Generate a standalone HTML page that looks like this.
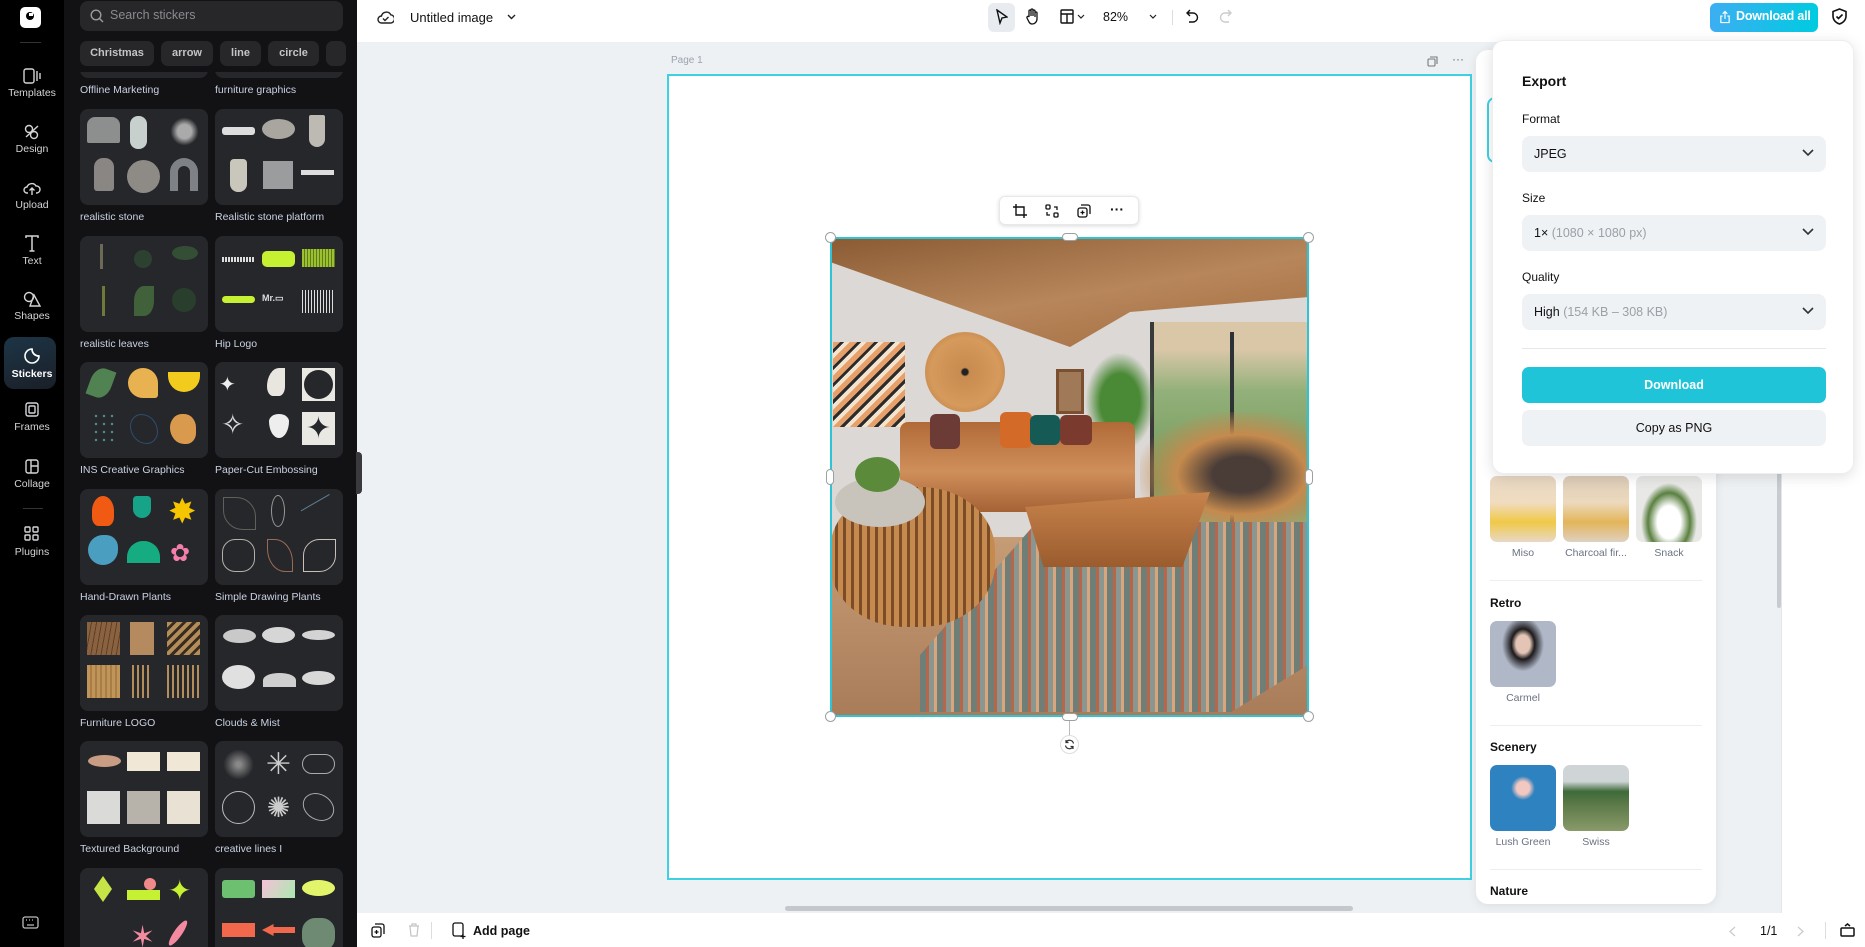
<!DOCTYPE html>
<html><head><meta charset="utf-8"><style>
*{box-sizing:border-box;margin:0;padding:0}
body{width:1865px;height:947px;overflow:hidden;position:relative;font-family:"Liberation Sans",sans-serif;background:#eef1f4}
.a{position:absolute}
.rail{left:0;top:0;width:64px;height:947px;background:#000}
.ri{position:absolute;left:0;width:64px;text-align:center;color:#d4d4d8;font-size:10.5px}
.ri svg{display:block;margin:0 auto 3px}
.panel{left:64px;top:0;width:293px;height:947px;background:#121214;overflow:hidden}
.card{position:absolute;width:128px;height:96px;background:#26272b;border-radius:8px}
.lbl{position:absolute;color:#c9d2e3;font-size:10.5px;white-space:nowrap}
.c{position:absolute;width:33px;height:33px}
.chip{position:absolute;top:41px;height:25px;background:#27272a;border-radius:7px;color:#c4c4c8;font-size:11px;font-weight:bold;text-align:center;line-height:25px;z-index:3}
.top{left:357px;top:0;width:1508px;height:42px;background:#fff}
.sel{position:absolute;left:29px;width:304px;height:36px;background:#eff2f5;border-radius:8px;font-size:12.5px;line-height:36px;padding-left:12px;color:#111}
.sel svg{position:absolute;right:12px;top:13px}
.h{position:absolute;width:11px;height:11px;border-radius:50%;background:#fff;border:1px solid #9aa0a6}
.th{position:absolute;width:66px;height:66px;border-radius:7px}
.tl{position:absolute;width:66px;text-align:center;font-size:10.5px;color:#6b7280}
.sec{position:absolute;left:14px;font-size:12px;font-weight:bold;color:#111}
.dv{position:absolute;left:14px;width:212px;height:1px;background:#eceef0}
</style></head><body>

<!-- left rail -->
<div class="a rail">
  <div class="a" style="left:20px;top:7px;width:21px;height:21px;background:#fff;border-radius:5px"><div class="a" style="left:6px;top:5px;width:8px;height:8px;border-radius:50%;background:#000"></div><div class="a" style="left:9px;top:6px;width:4px;height:3px;background:#fff"></div></div>
  <div class="a" style="left:20px;top:42px;width:21px;height:1px;background:#333"></div>
  <div class="ri" style="top:68px"><svg width="18" height="16" viewBox="0 0 18 16" fill="none" stroke="#d4d4d8" stroke-width="1.4"><rect x="1" y="1" width="10" height="14" rx="2"/><path d="M14 3v10M17 5v6"/></svg>Templates</div>
  <div class="ri" style="top:124px"><svg width="18" height="16" viewBox="0 0 18 16" fill="none" stroke="#d4d4d8" stroke-width="1.4"><circle cx="6" cy="5" r="3.5"/><circle cx="11" cy="11" r="3.5"/><path d="M3 13l12-11"/></svg>Design</div>
  <div class="ri" style="top:180px"><svg width="18" height="16" viewBox="0 0 18 16" fill="none" stroke="#d4d4d8" stroke-width="1.4"><path d="M5 13H4a3 3 0 010-6 5 5 0 019-1 3.5 3.5 0 011 7h-1M9 15V8M6.5 10.5L9 8l2.5 2.5"/></svg>Upload</div>
  <div class="ri" style="top:235px"><svg width="18" height="17" viewBox="0 0 18 17" fill="none" stroke="#d4d4d8" stroke-width="1.5"><path d="M3 3V1h12v2M9 1v15M6.5 16h5"/></svg>Text</div>
  <div class="ri" style="top:291px"><svg width="18" height="16" viewBox="0 0 18 16" fill="none" stroke="#d4d4d8" stroke-width="1.4"><circle cx="6" cy="6" r="4.5"/><path d="M11 4l6 11H7z"/></svg>Shapes</div>
  <div class="a" style="left:4px;top:337px;width:52px;height:52px;border-radius:10px;background:linear-gradient(160deg,#1d3547,#1a1f27)"></div>
  <div class="ri" style="top:347px;color:#fff;font-weight:bold"><svg width="18" height="18" viewBox="0 0 18 18" fill="none" stroke="#fff" stroke-width="1.6"><path d="M9 2a7 7 0 107 7c-4 0-7-3-7-7z"/><path d="M9 2c0 4 3 7 7 7"/></svg>Stickers</div>
  <div class="ri" style="top:402px"><svg width="18" height="16" viewBox="0 0 18 16" fill="none" stroke="#d4d4d8" stroke-width="1.4"><rect x="3" y="1" width="12" height="13" rx="2"/><rect x="6" y="4" width="6" height="7" rx="1"/></svg>Frames</div>
  <div class="ri" style="top:459px"><svg width="18" height="16" viewBox="0 0 18 16" fill="none" stroke="#d4d4d8" stroke-width="1.4"><rect x="3" y="1" width="12" height="13" rx="2"/><path d="M8 1v13M8 7h7"/></svg>Collage</div>
  <div class="a" style="left:23px;top:508px;width:20px;height:1px;background:#333"></div>
  <div class="ri" style="top:526px"><svg width="18" height="17" viewBox="0 0 18 17" fill="none" stroke="#d4d4d8" stroke-width="1.4"><rect x="2" y="1" width="5" height="5" rx="1"/><rect x="10" y="1" width="5" height="5" rx="1"/><rect x="2" y="9" width="5" height="5" rx="1"/><rect x="10" y="9" width="5" height="5" rx="1"/></svg>Plugins</div>
  <svg class="a" style="left:22px;top:916px" width="17" height="13" viewBox="0 0 17 13" fill="none" stroke="#bbb" stroke-width="1.3"><rect x="1" y="1" width="15" height="11" rx="2"/><path d="M4 4h1M7 4h1M10 4h1M13 4h0M5 9h7"/></svg>
</div>

<!-- sticker panel -->
<div class="a panel">
  <div class="card" style="left:16px;top:50px;height:28px;border-radius:0 0 8px 8px"></div>
  <div class="card" style="left:151px;top:50px;height:28px;border-radius:0 0 8px 8px"></div>
  <div class="a" style="left:0;top:0;width:293px;height:72px;background:#121214;z-index:2"></div>
  <div class="a" style="left:16px;top:1px;width:263px;height:30px;background:#27272a;border-radius:8px;z-index:3"></div>
  <svg class="a" style="left:26px;top:9px;z-index:4" width="14" height="14" viewBox="0 0 14 14" fill="none" stroke="#9a9aa0" stroke-width="1.4"><circle cx="6" cy="6" r="4.8"/><path d="M9.5 9.5L13 13"/></svg>
  <div class="a" style="left:46px;top:8px;color:#8a8a90;font-size:12.5px;z-index:4">Search stickers</div>
  <div class="chip" style="left:16px;width:74px">Christmas</div>
  <div class="chip" style="left:97px;width:52px">arrow</div>
  <div class="chip" style="left:156px;width:41px">line</div>
  <div class="chip" style="left:204px;width:51px">circle</div>
  <div class="chip" style="left:262px;width:20px"></div>
  <div class="lbl" style="left:16px;top:84px">Offline Marketing</div>
  <div class="lbl" style="left:151px;top:84px">furniture graphics</div>

  <!-- row1 -->
  <div class="card" style="left:16px;top:109px">
    <div class="c" style="left:7px;top:8px;background:#8c8f8e;border-radius:8px 8px 2px 2px;height:26px"></div>
    <div class="c" style="left:50px;top:7px;width:17px;background:#c7d0cc;border-radius:8px"></div>
    <div class="c" style="left:88px;top:6px;background:radial-gradient(#aaa 30%,transparent 60%)"></div>
    <div class="c" style="left:14px;top:49px;width:20px;background:#8a8683;border-radius:9px 9px 3px 3px"></div>
    <div class="c" style="left:47px;top:51px;background:#8e8b87;border-radius:50%"></div>
    <div class="c" style="left:90px;top:49px;width:28px;border:8px solid #7e8186;border-bottom:none;border-radius:14px 14px 0 0"></div>
  </div>
  <div class="card" style="left:151px;top:109px">
    <div class="c" style="left:7px;top:18px;height:8px;background:#ddd;border-radius:3px"></div>
    <div class="c" style="left:47px;top:10px;height:20px;background:#a9a59f;border-radius:50%"></div>
    <div class="c" style="left:94px;top:6px;width:16px;height:32px;background:#bcbab3;border-radius:2px 2px 8px 8px"></div>
    <div class="c" style="left:15px;top:50px;width:17px;background:#c9c6bc;border-radius:4px 4px 8px 8px"></div>
    <div class="c" style="left:48px;top:52px;width:30px;height:28px;background:#9a9c9d"></div>
    <div class="c" style="left:86px;top:61px;height:5px;background:#ddd"></div>
  </div>
  <div class="lbl" style="left:16px;top:211px">realistic stone</div>
  <div class="lbl" style="left:151px;top:211px">Realistic stone platform</div>

  <!-- row2 -->
  <div class="card" style="left:16px;top:236px">
    <div class="c" style="left:20px;top:8px;width:3px;height:25px;background:#6a6a55"></div>
    <div class="c" style="left:54px;top:14px;width:18px;height:18px;background:#2f4d33;border-radius:50%;opacity:.7"></div>
    <div class="c" style="left:92px;top:10px;width:26px;height:14px;background:#3a5e3a;border-radius:50%;opacity:.7"></div>
    <div class="c" style="left:22px;top:50px;width:3px;height:30px;background:#6d7a3a"></div>
    <div class="c" style="left:54px;top:50px;width:20px;height:30px;background:#49713f;border-radius:50% 0;opacity:.8"></div>
    <div class="c" style="left:92px;top:52px;width:24px;height:24px;background:#2d4e30;border-radius:50%;opacity:.6"></div>
  </div>
  <div class="card" style="left:151px;top:236px">
    <div class="c" style="left:7px;top:21px;height:5px;background:repeating-linear-gradient(90deg,#ddd 0 2px,transparent 2px 3px)"></div>
    <div class="c" style="left:47px;top:15px;height:16px;background:#c6f032;border-radius:5px"></div>
    <div class="c" style="left:87px;top:13px;height:18px;background:repeating-linear-gradient(90deg,#9dc030 0 2px,#5d7a18 2px 3px)"></div>
    <div class="c" style="left:7px;top:60px;height:7px;background:#c6f032;border-radius:4px"></div>
    <div class="c" style="left:47px;top:57px;color:#ddd;font-size:9px;font-weight:bold">Mr.▭</div>
    <div class="c" style="left:87px;top:54px;height:23px;background:repeating-linear-gradient(90deg,#ddd 0 1px,transparent 1px 3px)"></div>
  </div>
  <div class="lbl" style="left:16px;top:338px">realistic leaves</div>
  <div class="lbl" style="left:151px;top:338px">Hip Logo</div>

  <!-- row3 -->
  <div class="card" style="left:16px;top:362px">
    <div class="c" style="left:10px;top:6px;width:22px;height:30px;background:#5c9a5c;border-radius:50% 0;opacity:.8;transform:rotate(20deg)"></div>
    <div class="c" style="left:48px;top:6px;width:30px;height:30px;background:#e7b24f;border-radius:50% 50% 10% 50%"></div>
    <div class="c" style="left:88px;top:10px;width:32px;height:20px;background:#f1cb1d;border-radius:0 0 20px 20px"></div>
    <div class="c" style="left:12px;top:50px;width:24px;height:30px;background:radial-gradient(circle,#4a8a8a 20%,transparent 25%) 0 0/8px 8px"></div>
    <div class="c" style="left:50px;top:52px;width:28px;height:30px;border:1.5px solid #2d4d70;border-radius:40% 60%"></div>
    <div class="c" style="left:90px;top:52px;width:26px;height:30px;background:#d99a4d;border-radius:50% 50% 40% 60%"></div>
  </div>
  <div class="card" style="left:151px;top:362px">
    <div class="c" style="left:4px;top:10px;color:#eee;font-size:20px">✦</div>
    <div class="c" style="left:52px;top:6px;width:18px;height:28px;background:#e8e6df;border-radius:80% 0 40% 40%"></div>
    <div class="c" style="left:87px;top:6px;background:#e9e8e3"><div class="a" style="left:2px;top:2px;width:29px;height:29px;border-radius:50%;background:#26272b"></div></div>
    <div class="c" style="left:6px;top:46px;color:#ddd;font-size:28px;line-height:33px">✧</div>
    <div class="c" style="left:54px;top:52px;width:20px;height:24px;background:#eee;border-radius:50% 50% 50% 50%/30% 30% 70% 70%"></div>
    <div class="c" style="left:87px;top:50px;background:#e9e8e3;color:#26272b;font-size:30px;line-height:33px;text-align:center">✦</div>
  </div>
  <div class="lbl" style="left:16px;top:464px">INS Creative Graphics</div>
  <div class="lbl" style="left:151px;top:464px">Paper-Cut Embossing</div>

  <!-- row4 -->
  <div class="card" style="left:16px;top:489px">
    <div class="c" style="left:12px;top:7px;width:22px;height:30px;background:#f05a12;border-radius:50% 50% 30% 30%"></div>
    <div class="c" style="left:53px;top:7px;width:18px;height:22px;background:#16a387;border-radius:4px 4px 10px 10px"></div>
    <div class="c" style="left:88px;top:7px;color:#f6c500;font-size:34px;line-height:33px">✸</div>
    <div class="c" style="left:8px;top:46px;width:30px;height:30px;background:#4a9fc0;border-radius:50% 40% 50% 50%"></div>
    <div class="c" style="left:47px;top:52px;height:22px;background:#16ac82;border-radius:16px 16px 0 0"></div>
    <div class="c" style="left:90px;top:50px;color:#f67eab;font-size:24px">✿</div>
  </div>
  <div class="card" style="left:151px;top:489px">
    <div class="c" style="left:8px;top:8px;border:1px solid #6e6f66;border-radius:0 60%;opacity:.8"></div>
    <div class="c" style="left:56px;top:6px;width:14px;height:32px;border:1px solid #9a9891;border-radius:50%"></div>
    <div class="c" style="left:88px;top:12px;height:18px;border-top:1.5px solid #5d7f96;transform:rotate(-30deg)"></div>
    <div class="c" style="left:7px;top:50px;border:1px solid #b3b0a4;border-radius:40%"></div>
    <div class="c" style="left:52px;top:50px;width:26px;border:1px solid #9a6a55;border-radius:0 70%"></div>
    <div class="c" style="left:88px;top:50px;border:1px solid #c8c1b6;border-radius:50% 0"></div>
  </div>
  <div class="lbl" style="left:16px;top:591px">Hand-Drawn Plants</div>
  <div class="lbl" style="left:151px;top:591px">Simple Drawing Plants</div>

  <!-- row5 -->
  <div class="card" style="left:16px;top:615px">
    <div class="c" style="left:7px;top:7px;background:repeating-linear-gradient(100deg,#8a6240 0 4px,#5d3f27 4px 5px)"></div>
    <div class="c" style="left:50px;top:7px;width:24px;background:#b58a5f"></div>
    <div class="c" style="left:87px;top:7px;background:repeating-linear-gradient(135deg,#b38d5a 0 4px,#3a2d20 4px 7px)"></div>
    <div class="c" style="left:7px;top:50px;background:repeating-linear-gradient(90deg,#c0955a 0 3px,#a97d45 3px 5px)"></div>
    <div class="c" style="left:52px;top:50px;width:20px;background:repeating-linear-gradient(90deg,#b38d5a 0 2px,transparent 2px 5px)"></div>
    <div class="c" style="left:87px;top:50px;background:repeating-linear-gradient(90deg,#b38d5a 0 2px,transparent 2px 5px)"></div>
  </div>
  <div class="card" style="left:151px;top:615px">
    <div class="c" style="left:8px;top:14px;height:14px;background:#c9c9c9;border-radius:50%"></div>
    <div class="c" style="left:47px;top:12px;height:16px;background:#d6d6d6;border-radius:50%"></div>
    <div class="c" style="left:87px;top:15px;height:10px;background:#d3d3d3;border-radius:50%"></div>
    <div class="c" style="left:7px;top:50px;height:24px;background:#e0e0e0;border-radius:50%"></div>
    <div class="c" style="left:48px;top:58px;height:14px;background:#cfcfcf;border-radius:50% 50% 0 0"></div>
    <div class="c" style="left:87px;top:56px;height:14px;background:#d8d8d8;border-radius:50%"></div>
  </div>
  <div class="lbl" style="left:16px;top:717px">Furniture LOGO</div>
  <div class="lbl" style="left:151px;top:717px">Clouds &amp; Mist</div>

  <!-- row6 -->
  <div class="card" style="left:16px;top:741px">
    <div class="c" style="left:8px;top:14px;height:12px;background:#c99c84;border-radius:50%"></div>
    <div class="c" style="left:47px;top:11px;height:19px;background:#f1e7d6"></div>
    <div class="c" style="left:87px;top:11px;height:19px;background:#f1e7d6"></div>
    <div class="c" style="left:7px;top:50px;background:#dadad8"></div>
    <div class="c" style="left:47px;top:50px;background:#b8b3aa"></div>
    <div class="c" style="left:87px;top:50px;background:#e8e1d4"></div>
  </div>
  <div class="card" style="left:151px;top:741px">
    <div class="c" style="left:7px;top:7px;border-radius:50%;background:radial-gradient(#888 10%,transparent 65%)"></div>
    <div class="c" style="left:47px;top:7px;color:#ccc;font-size:30px;line-height:33px;text-align:center">✳</div>
    <div class="c" style="left:87px;top:13px;height:20px;border:1px solid #aaa;border-radius:10px"></div>
    <div class="c" style="left:7px;top:50px;border:1px solid #bbb;border-radius:50%"></div>
    <div class="c" style="left:47px;top:50px;color:#ccc;font-size:28px;line-height:33px;text-align:center">✺</div>
    <div class="c" style="left:87px;top:53px;height:26px;border:1px solid #aaa;border-radius:50%;transform:rotate(30deg)"></div>
  </div>
  <div class="lbl" style="left:16px;top:843px">Textured Background</div>
  <div class="lbl" style="left:151px;top:843px">creative lines I</div>

  <!-- row7 -->
  <div class="card" style="left:16px;top:868px;height:90px">
    <div class="c" style="left:14px;top:8px;width:18px;height:26px;background:#c6e447;clip-path:polygon(50% 0,100% 50%,50% 100%,0 50%)"></div>
    <div class="c" style="left:47px;top:22px;height:10px;background:#c6f032"></div>
    <div class="c" style="left:64px;top:10px;width:12px;height:12px;background:#f08a8a;border-radius:50%"></div>
    <div class="c" style="left:88px;top:6px;color:#c6f032;font-size:28px">✦</div>
    <div class="c" style="left:50px;top:52px;color:#f28ba0;font-size:30px">✶</div>
    <div class="c" style="left:94px;top:50px;width:8px;height:30px;background:#f48aa0;border-radius:50%;transform:rotate(35deg)"></div>
  </div>
  <div class="card" style="left:151px;top:868px;height:90px">
    <div class="c" style="left:7px;top:12px;height:18px;background:#6cc070;border-radius:3px"></div>
    <div class="c" style="left:47px;top:12px;height:18px;background:linear-gradient(120deg,#f6c0d8,#a9eab0)"></div>
    <div class="c" style="left:87px;top:12px;height:16px;background:#e2f46a;border-radius:50%"></div>
    <div class="c" style="left:7px;top:55px;height:14px;background:#f2684d"></div>
    <div class="c" style="left:47px;top:56px;height:12px;background:#f2684d;clip-path:polygon(0 50%,35% 0,35% 25%,100% 25%,100% 75%,35% 75%,35% 100%)"></div>
    <div class="c" style="left:87px;top:50px;background:#6e8a72;border-radius:40%"></div>
  </div>
</div>
<div class="a" style="left:356px;top:452px;width:6px;height:42px;background:#3a3a3e;border-radius:0 4px 4px 0"></div>

<!-- top bar -->
<div class="a top">
  <svg class="a" style="left:20px;top:9px" width="17" height="16" viewBox="0 0 17 16" fill="none" stroke="#222" stroke-width="1.4"><path d="M5 14H4.5a3.5 3.5 0 010-7 5 5 0 019.3-1.2A3.8 3.8 0 0113 14H5z"/><path d="M6 9.5l2 2 3.5-3.5"/></svg>
  <div class="a" style="left:53px;top:10px;font-size:13px;color:#111">Untitled image</div>
  <svg class="a" style="left:150px;top:14px" width="9" height="6" viewBox="0 0 9 6" fill="none" stroke="#222" stroke-width="1.4"><path d="M1 1l3.5 3.5L8 1"/></svg>
  <div class="a" style="left:631px;top:3px;width:27px;height:29px;background:#e8ebef;border-radius:6px"></div>
  <svg class="a" style="left:639px;top:9px" width="12" height="16" viewBox="0 0 12 16" fill="none" stroke="#111" stroke-width="1.4"><path d="M1 1l10 7-5 1-2 5z"/></svg>
  <svg class="a" style="left:668px;top:8px" width="15" height="17" viewBox="0 0 15 17" fill="none" stroke="#111" stroke-width="1.3"><path d="M4 9V3a1 1 0 012 0v5V2a1 1 0 012 0v6V3a1 1 0 012 0v6V5a1 1 0 012 0v6a5 5 0 01-5 5H7a4 4 0 01-3-2l-2-4a1 1 0 012-1z"/></svg>
  <svg class="a" style="left:703px;top:9px" width="14" height="15" viewBox="0 0 14 15" fill="none" stroke="#111" stroke-width="1.4"><rect x="1" y="1" width="12" height="13" rx="1"/><path d="M1 5h12M7 5v9"/></svg>
  <svg class="a" style="left:720px;top:14px" width="8" height="5" viewBox="0 0 8 5" fill="none" stroke="#222" stroke-width="1.2"><path d="M1 1l3 3 3-3"/></svg>
  <div class="a" style="left:746px;top:10px;font-size:12.5px;color:#111">82%</div>
  <svg class="a" style="left:792px;top:14px" width="8" height="5" viewBox="0 0 8 5" fill="none" stroke="#222" stroke-width="1.2"><path d="M1 1l3 3 3-3"/></svg>
  <div class="a" style="left:815px;top:10px;width:1px;height:15px;background:#ddd"></div>
  <svg class="a" style="left:829px;top:9px" width="13" height="15" viewBox="0 0 13 15" fill="none" stroke="#111" stroke-width="1.4"><path d="M4 1L1 4l3 3M1 4h6a4.5 4.5 0 010 9H3"/></svg>
  <svg class="a" style="left:862px;top:9px" width="13" height="15" viewBox="0 0 13 15" fill="none" stroke="#ccc" stroke-width="1.4"><path d="M9 1l3 3-3 3M12 4H6a4.5 4.5 0 000 9h4"/></svg>
  <div class="a" style="left:1353px;top:3px;width:108px;height:29px;border-radius:6px;background:linear-gradient(90deg,#3caef2,#00cbe0)"></div>
  <svg class="a" style="left:1362px;top:10px" width="12" height="14" viewBox="0 0 13 14" fill="none" stroke="#fff" stroke-width="1.3"><path d="M4 6H2v7h9V6H9M6.5 9V1M4 3.5L6.5 1 9 3.5"/></svg>
  <div class="a" style="left:1379px;top:9px;color:#fff;font-size:12.5px;font-weight:bold;letter-spacing:-0.2px">Download all</div>
  <svg class="a" style="left:1475px;top:8px" width="15" height="17" viewBox="0 0 15 17" fill="none" stroke="#111" stroke-width="1.6"><path d="M7.5 1L14 3.5V8c0 4-3 7-6.5 8C4 15 1 12 1 8V3.5z"/><path d="M4.5 8.5l2 2 4-4"/></svg>
</div>

<!-- canvas right strip -->
<div class="a" style="left:1781px;top:42px;width:84px;height:871px;background:#fff;border-left:1px solid #e3e6ea"></div>
<div class="a" style="left:1777px;top:50px;width:4px;height:558px;background:#c8ccd0;border-radius:2px"></div>

<!-- page -->
<div class="a" style="left:671px;top:55px;font-size:10px;color:#9ca3af">Page 1</div>
<svg class="a" style="left:1427px;top:56px" width="11" height="11" viewBox="0 0 11 11" fill="none" stroke="#777" stroke-width="1.1"><rect x="1" y="3" width="7" height="7" rx="1"/><path d="M3 1h7v7"/></svg>
<div class="a" style="left:1452px;top:52px;font-size:12px;color:#666">···</div>
<div class="a" style="left:667px;top:74px;width:805px;height:806px;background:#fff;border:2px solid #3fd0e2"></div>

<!-- image -->
<div class="a" style="left:830px;top:237px;width:479px;height:480px;overflow:hidden;background:#dcd8d6">
  <div class="a" style="left:0;top:0;width:479px;height:120px;background:linear-gradient(170deg,#8a5a34,#b7865a 50%,#a0683d);clip-path:polygon(0 0,100% 0,100% 60px,300px 75px,240px 110px,0 25px)"></div>
  <div class="a" style="left:320px;top:85px;width:159px;height:230px;background:linear-gradient(180deg,#d9c7a8 0 12%,#93b07a 30%,#6f9a5a 70%,#a9b890);border-left:4px solid #3a3a3a"></div>
  <div class="a" style="left:400px;top:95px;width:4px;height:220px;background:#2e3236"></div>
  <div class="a" style="left:3px;top:105px;width:72px;height:85px;background:repeating-linear-gradient(135deg,#e7a06a 0 5px,#2b2b2b 5px 8px,#f3e4d0 8px 12px)"></div>
  <div class="a" style="left:95px;top:95px;width:80px;height:80px;border-radius:50%;background:radial-gradient(circle,#222 5%,#c98b4f 8%,#d59a5c 60%,#b7773d)"></div>
  <div class="a" style="left:226px;top:132px;width:28px;height:45px;background:#a07a58;border:3px solid #7a5030"></div>
  <div class="a" style="left:255px;top:115px;width:70px;height:100px;background:radial-gradient(ellipse,#4a8a36 40%,transparent 70%)"></div>
  <div class="a" style="left:70px;top:185px;width:235px;height:90px;background:linear-gradient(180deg,#b06a38,#cf8f5a 55%,#a56235);border-radius:8px"></div>
  <div class="a" style="left:100px;top:177px;width:30px;height:35px;background:#6d3b36;border-radius:6px"></div>
  <div class="a" style="left:170px;top:175px;width:32px;height:36px;background:#d36a28;border-radius:6px"></div>
  <div class="a" style="left:200px;top:178px;width:30px;height:30px;background:#155a55;border-radius:6px"></div>
  <div class="a" style="left:230px;top:178px;width:32px;height:30px;background:#7a3a2e;border-radius:6px"></div>
  <div class="a" style="left:310px;top:175px;width:169px;height:125px;background:radial-gradient(ellipse at 60% 50%,#4a3d38 20%,#c58a4e 45%,transparent 75%)"></div>
  <div class="a" style="left:0;top:300px;width:479px;height:180px;background:linear-gradient(180deg,#c69c76,#a87c58)"></div>
  <div class="a" style="left:90px;top:285px;width:389px;height:190px;background:repeating-linear-gradient(90deg,#6f7f78 0 6px,#b8664a 6px 9px,#8a9690 9px 14px,#d9a57d 14px 17px);clip-path:polygon(30% 0,100% 0,100% 75%,80% 100%,0 100%,0 70%)"></div>
  <div class="a" style="left:195px;top:255px;width:185px;height:75px;background:linear-gradient(180deg,#c7834c,#9b5c2e);clip-path:polygon(0 20%,100% 0,85% 100%,10% 100%)"></div>
  <div class="a" style="left:0;top:250px;width:165px;height:140px;border-radius:45%;background:repeating-linear-gradient(90deg,#c6894e 0 5px,#7a4c27 5px 8px)"></div>
  <div class="a" style="left:5px;top:240px;width:90px;height:50px;border-radius:50%;background:#c9c4bb"></div>
  <div class="a" style="left:25px;top:220px;width:45px;height:35px;border-radius:50%;background:#5a8a3a"></div>
</div>
<div class="a" style="left:830px;top:237px;width:479px;height:480px;border:2px solid #2dc4d8"></div>
<div class="h" style="left:825px;top:232px"></div><div class="h" style="left:1303px;top:232px"></div>
<div class="h" style="left:825px;top:711px"></div><div class="h" style="left:1303px;top:711px"></div>
<div class="a" style="left:1062px;top:233px;width:16px;height:8px;border-radius:4px;background:#fff;border:1px solid #9aa0a6"></div>
<div class="a" style="left:1062px;top:713px;width:16px;height:8px;border-radius:4px;background:#fff;border:1px solid #9aa0a6"></div>
<div class="a" style="left:826px;top:469px;width:8px;height:16px;border-radius:4px;background:#fff;border:1px solid #9aa0a6"></div>
<div class="a" style="left:1305px;top:469px;width:8px;height:16px;border-radius:4px;background:#fff;border:1px solid #9aa0a6"></div>
<div class="a" style="left:1069px;top:721px;width:1px;height:14px;background:#bbb"></div>
<div class="a" style="left:1060px;top:735px;width:19px;height:19px;border-radius:50%;background:#fff;border:1px solid #ddd"></div>
<svg class="a" style="left:1064px;top:739px" width="11" height="11" viewBox="0 0 11 11" fill="none" stroke="#333" stroke-width="1.2"><path d="M9.5 4.5A4 4 0 002 3.5M1.5 6.5A4 4 0 009 7.5M2 1v2.5h2.5M9 10V7.5H6.5"/></svg>
<!-- context toolbar -->
<div class="a" style="left:999px;top:196px;width:140px;height:29px;background:#fff;border-radius:6px;box-shadow:0 1px 4px rgba(0,0,0,.15);border:1px solid #e6e8ea"></div>
<svg class="a" style="left:1013px;top:204px" width="14" height="14" viewBox="0 0 14 14" fill="none" stroke="#111" stroke-width="1.4"><path d="M3 0v11h11M0 3h11v11"/></svg>
<svg class="a" style="left:1045px;top:204px" width="14" height="14" viewBox="0 0 14 14" fill="none" stroke="#111" stroke-width="1.3"><rect x="1" y="1" width="4" height="4" rx="1"/><rect x="9" y="9" width="4" height="4" rx="1"/><path d="M9 3h3v3M5 11H2V8"/></svg>
<svg class="a" style="left:1077px;top:204px" width="14" height="14" viewBox="0 0 14 14" fill="none" stroke="#111" stroke-width="1.3"><rect x="1" y="4" width="9" height="9" rx="2"/><path d="M4 1h7a2 2 0 012 2v7M5.5 6.5v4M3.5 8.5h4"/></svg>
<div class="a" style="left:1110px;top:201px;font-size:14px;font-weight:bold;color:#111">···</div>

<!-- right filter panel -->
<div class="a" style="left:1476px;top:50px;width:240px;height:854px;background:#fff;border-radius:12px;box-shadow:0 2px 10px rgba(0,0,0,.08)">
  <div class="a" style="left:11px;top:47px;width:20px;height:66px;border:2px solid #3fd0e2;border-right:none;border-radius:8px 0 0 8px"></div>
  <div class="th" style="left:14px;top:426px;background:linear-gradient(180deg,#e7d6c2,#f0dcc0 40%,#f0c948 70%,#e8d8c6)"></div>
  <div class="th" style="left:87px;top:426px;background:linear-gradient(180deg,#dccbb8,#ecd9bd 40%,#e3b55a 70%,#dfd0c0)"></div>
  <div class="th" style="left:160px;top:426px;background:radial-gradient(ellipse at 50% 70%,#fff 25%,#5a8040 45%,#e8e8e6 60%)"></div>
  <div class="tl" style="left:14px;top:497px">Miso</div>
  <div class="tl" style="left:87px;top:497px">Charcoal fir...</div>
  <div class="tl" style="left:160px;top:497px">Snack</div>
  <div class="dv" style="top:530px"></div>
  <div class="sec" style="top:546px">Retro</div>
  <div class="th" style="left:14px;top:571px;background:radial-gradient(ellipse at 50% 35%,#e3c4b5 15%,#1c1a1c 25%,#b0b8c8 45%),linear-gradient(#aab,#c9a08a)"></div>
  <div class="tl" style="left:14px;top:642px">Carmel</div>
  <div class="dv" style="top:675px"></div>
  <div class="sec" style="top:690px">Scenery</div>
  <div class="th" style="left:14px;top:715px;background:radial-gradient(circle at 50% 35%,#f2c8c0 12%,#2f82c0 22%)"></div>
  <div class="th" style="left:87px;top:715px;background:linear-gradient(180deg,#cfd4d6 0 25%,#3e6a3a 40%,#5c7a48 60%,#8a9a6a)"></div>
  <div class="tl" style="left:14px;top:786px">Lush Green</div>
  <div class="tl" style="left:87px;top:786px">Swiss</div>
  <div class="dv" style="top:819px"></div>
  <div class="sec" style="top:834px">Nature</div>
</div>

<!-- export popover -->
<div class="a" style="left:1492px;top:40px;width:362px;height:434px;background:#fff;border-radius:12px;box-shadow:0 3px 14px rgba(0,0,0,.12);border:1px solid #eceef0">
  <div class="a" style="left:29px;top:32px;font-size:14px;font-weight:bold;color:#111">Export</div>
  <div class="a" style="left:29px;top:71px;font-size:12px;color:#111">Format</div>
  <div class="sel" style="top:95px">JPEG<svg width="12" height="8" viewBox="0 0 12 8" fill="none" stroke="#333" stroke-width="1.6"><path d="M1 1l5 5 5-5"/></svg></div>
  <div class="a" style="left:29px;top:150px;font-size:12px;color:#111">Size</div>
  <div class="sel" style="top:174px">1× <span style="color:#9aa0a6">(1080 × 1080 px)</span><svg width="12" height="8" viewBox="0 0 12 8" fill="none" stroke="#333" stroke-width="1.6"><path d="M1 1l5 5 5-5"/></svg></div>
  <div class="a" style="left:29px;top:229px;font-size:12px;color:#111">Quality</div>
  <div class="sel" style="top:253px">High <span style="color:#9aa0a6">(154 KB – 308 KB)</span><svg width="12" height="8" viewBox="0 0 12 8" fill="none" stroke="#333" stroke-width="1.6"><path d="M1 1l5 5 5-5"/></svg></div>
  <div class="a" style="left:29px;top:307px;width:304px;height:1px;background:#e5e7ea"></div>
  <div class="a" style="left:29px;top:326px;width:304px;height:36px;background:#20c4d8;border-radius:7px;color:#fff;font-size:12.5px;font-weight:bold;text-align:center;line-height:36px">Download</div>
  <div class="a" style="left:29px;top:369px;width:304px;height:36px;background:#eff2f5;border-radius:7px;color:#111;font-size:12.5px;text-align:center;line-height:36px">Copy as PNG</div>
</div>

<!-- bottom bar -->
<div class="a" style="left:785px;top:906px;width:568px;height:5px;background:#c4c8cc;border-radius:3px"></div>
<div class="a" style="left:357px;top:913px;width:1508px;height:34px;background:#fff"></div>
<svg class="a" style="left:371px;top:923px" width="14" height="15" viewBox="0 0 14 15" fill="none" stroke="#111" stroke-width="1.3"><rect x="1" y="4" width="9" height="10" rx="2"/><path d="M4 1h7a2 2 0 012 2v8M5.5 7v4M3.5 9h4"/></svg>
<svg class="a" style="left:408px;top:923px" width="12" height="14" viewBox="0 0 12 14" fill="none" stroke="#c4c4c4" stroke-width="1.2"><path d="M1 3h10M4 3V1h4v2M2 3l1 10h6l1-10"/></svg>
<div class="a" style="left:431px;top:922px;width:1px;height:17px;background:#ddd"></div>
<svg class="a" style="left:452px;top:922px" width="15" height="17" viewBox="0 0 15 17" fill="none" stroke="#111" stroke-width="1.3"><rect x="1" y="1" width="10" height="13" rx="2"/><path d="M11 12v5M8.5 14.5h5"/></svg>
<div class="a" style="left:473px;top:924px;font-size:12.5px;color:#111;font-weight:bold">Add page</div>
<svg class="a" style="left:1729px;top:926px" width="7" height="11" viewBox="0 0 7 11" fill="none" stroke="#ccc" stroke-width="1.3"><path d="M6 1L1 5.5 6 10"/></svg>
<div class="a" style="left:1760px;top:924px;font-size:12.5px;color:#111">1/1</div>
<svg class="a" style="left:1797px;top:926px" width="7" height="11" viewBox="0 0 7 11" fill="none" stroke="#ccc" stroke-width="1.3"><path d="M1 1l5 4.5L1 10"/></svg>
<div class="a" style="left:1825px;top:922px;width:1px;height:17px;background:#ddd"></div>
<svg class="a" style="left:1840px;top:923px" width="15" height="14" viewBox="0 0 15 14" fill="none" stroke="#111" stroke-width="1.5"><rect x="1" y="5" width="13" height="8" rx="1"/><path d="M5 3l2.5-2L10 3"/></svg>
</body></html>
